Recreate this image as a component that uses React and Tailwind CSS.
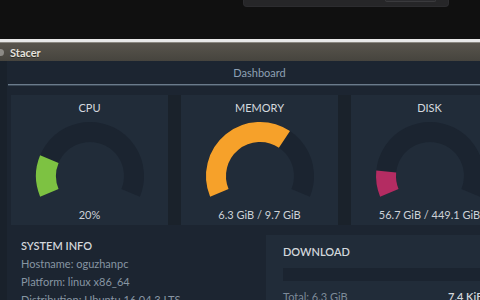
function Gauge({ percent, color }) {
  const cx = 60
  const cy = 57
  const r = 44
  const start = 157.5
  const span = 225
  const pt = (deg) => {
    const a = (deg * Math.PI) / 180
    return [cx + r * Math.cos(a), cy + r * Math.sin(a)]
  }
  const arc = (from, to) => {
    const [x1, y1] = pt(from)
    const [x2, y2] = pt(to)
    const large = to - from > 180 ? 1 : 0
    return `M ${x1} ${y1} A ${r} ${r} 0 ${large} 1 ${x2} ${y2}`
  }
  return (
    <svg width="120" height="84" viewBox="0 0 120 84" className="mt-[4px]">
      <path d={arc(start, start + span)} fill="none" stroke="#1b2430" strokeWidth="20" />
      <path d={arc(start, start + (span * percent) / 100)} fill="none" stroke={color} strokeWidth="20" />
    </svg>
  )
}

function StatCard({ title, value, percent, color }) {
  return (
    <div className="w-[157px] h-[130px] shrink-0 bg-[#212c39] flex flex-col items-center">
      <p className="mt-[5px] leading-[15px] text-[11px] text-[#d4d9df]">{title}</p>
      <Gauge percent={percent} color={color} />
      <p className="mt-[4px] leading-[15px] text-[11px] text-[#cdd2d8]">{value}</p>
    </div>
  )
}

export default function App() {
  return (
    <div className="w-[480px] h-[300px] overflow-hidden bg-[#101010] font-['Lato',sans-serif]">
      {/* desktop behind */}
      <div className="h-[39px]">
        <div className="ml-[243px] w-[206px] h-[7px] bg-[#262628] rounded-b-[4px] border-b border-x border-[#2c2c2f]">
          <div className="ml-[141px] w-[51px] h-[2px] bg-[#2b2b2e] rounded-b-[3px] border-b border-x border-[#3a3a3d]"></div>
        </div>
      </div>
      <div className="h-[3px] bg-[#e8e8e8]"></div>
      <div className="h-[1px] bg-[#8a8780]"></div>

      {/* title bar */}
      <div className="h-[18px] bg-gradient-to-b from-[#58544c] to-[#46443e] flex items-center">
        <div className="w-[7px] h-[7px] -ml-[3px] rounded-full bg-[#8c8a85]"></div>
        <p className="ml-[6px] text-[11px] font-bold text-[#e4e1dc] leading-none [text-shadow:0_1px_0_#2a2925]">Stacer</p>
      </div>

      {/* window body */}
      <div className="flex h-[239px] bg-[#1c2531]">
        <div className="w-[7px] shrink-0 bg-[#19212b]"></div>
        <div className="w-[505px] shrink-0">
          <p className="h-[23px] leading-[23px] text-center text-[11px] text-[#8ea0b4]">Dashboard</p>
          <div className="ml-[1px] h-[1px] bg-[#6b7b8b]"></div>
          <div className="ml-[1px] h-[1px] bg-[#3a4856]"></div>

          <div className="mt-[9px] ml-[4px] flex gap-[13px] bg-[#1a222b]">
            <StatCard title="CPU" value="20%" percent={20} color="#7dc242" />
            <StatCard title="MEMORY" value="6.3 GiB / 9.7 GiB" percent={65} color="#f6a12a" />
            <StatCard title="DISK" value="56.7 GiB / 449.1 GiB" percent={12.6} color="#b42c62" />
          </div>

          <div className="flex">
            <div className="w-[255px] shrink-0 pl-[14px] pt-[14px]">
              <p className="leading-[14px] text-[11px] font-semibold text-[#d3d7dc]">SYSTEM INFO</p>
              <ul className="mt-[2px] text-[11px] text-[#8795a3]">
                <li className="leading-[18px]">Hostname: oguzhanpc</li>
                <li className="leading-[18px]">Platform: linux x86_64</li>
                <li className="leading-[18px]">Distribution: Ubuntu 16.04.3 LTS</li>
              </ul>
            </div>
            <div className="mt-[10px] ml-[4px] flex-1 h-[80px] bg-[#212c39] pl-[17px] pt-[10px]">
              <p className="leading-[14px] text-[11px] font-semibold text-[#d3d7dc]">DOWNLOAD</p>
              <div className="mt-[9px] h-[13px] bg-[#1b2430]"></div>
              <div className="mt-[9px] flex leading-[14px] text-[11px]">
                <span className="w-[165px] text-[#7d8a98]">Total: 6.3 GiB</span>
                <span className="font-semibold text-[#d3d7dc]">7.4 KiB</span>
              </div>
            </div>
          </div>
        </div>
      </div>
    </div>
  )
}
